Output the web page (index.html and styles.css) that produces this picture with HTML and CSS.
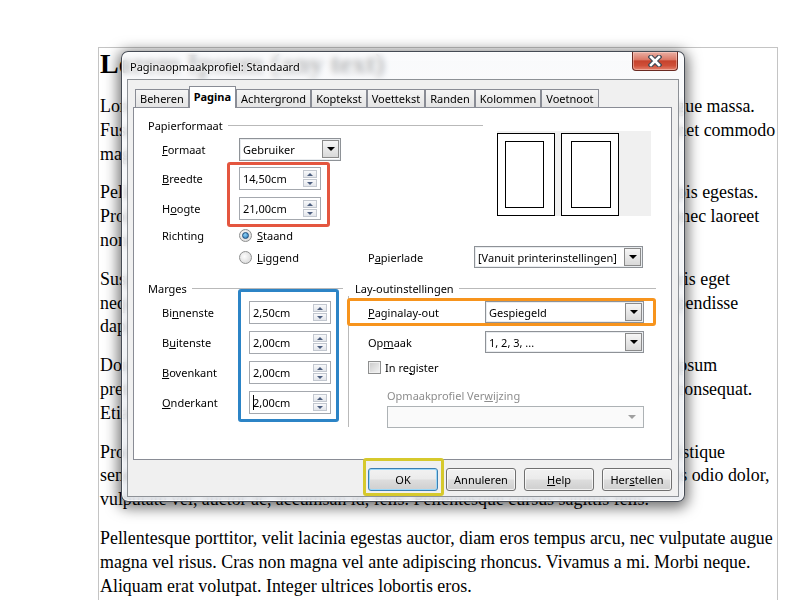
FILE: index.html
```html
<!DOCTYPE html>
<html lang="nl">
<head>
    <meta charset="UTF-8">
    <title>Paginaopmaakprofiel: Standaard</title>
    <link rel="stylesheet" href="styles.css">
</head>
<body>
    <!-- document page behind the dialog -->
    <div class="doc">
        <h1>Lorem Ipsum (any text)</h1>
        <p>Lorem ipsum dolor sit amet, consectetuer adipiscing elit. Maecenas porttitor congue massa. Fusce posuere, magna sed pulvinar ultricies, purus lectus malesuada libero, sit amet commodo magna eros quis urna.</p>
        <p>Pellentesque habitant morbi tristique senectus et netus et malesuada fames ac turpis egestas. Proin pharetra nonummy pede. Mauris et orci. Aenean nec lorem. In porttitor. Donec laoreet nonummy augue.</p>
        <p>Suspendisse dui purus, scelerisque at, vulputate vitae, pretium mattis, nunc. Mauris eget neque at sem venenatis eleifend. Ut nonummy. Fusce aliquet pede non pede. Suspendisse dapibus lorem pellentesque magna. Integer nulla.</p>
        <p>Donec blandit feugiat ligula. Donec hendrerit, felis et imperdiet euismod, purus ipsum pretium metus, in lacinia nulla nisl eget sapien. Donec ut est in lectus consequat consequat. Etiam eget dui. Aliquam erat volutpat. Sed at lorem in nunc porta tristique.</p>
        <p>Proin nec augue. Quisque aliquam tempor magna. Pellentesque habitant morbi tristique senectus et netus et malesuada fames ac turpis egestas. Nunc ac magna. Maecenas odio dolor, vulputate vel, auctor ac, accumsan id, felis. Pellentesque cursus sagittis felis.</p>
        <p>Pellentesque porttitor, velit lacinia egestas auctor, diam eros tempus arcu, nec vulputate augue magna vel risus. Cras non magna vel ante adipiscing rhoncus. Vivamus a mi. Morbi neque. Aliquam erat volutpat. Integer ultrices lobortis eros.</p>
    </div>

    <!-- page style dialog -->
    <div class="dialog">
        <div class="titlebar">
            <span class="title">Paginaopmaakprofiel: Standaard</span>
            <span class="close">
                <svg width="14" height="12" viewBox="0 0 14 12">
                    <path d="M3 2 L11 10 M11 2 L3 10" stroke="#434a55" stroke-width="5" stroke-linecap="square"/>
                    <path d="M3 2 L11 10 M11 2 L3 10" stroke="#fff" stroke-width="2.6" stroke-linecap="square"/>
                </svg>
            </span>
        </div>

        <div class="client">
            <div class="tabs">
                <div class="tab">Beheren</div>
                <div class="tab active">Pagina</div>
                <div class="tab">Achtergrond</div>
                <div class="tab">Koptekst</div>
                <div class="tab">Voettekst</div>
                <div class="tab">Randen</div>
                <div class="tab">Kolommen</div>
                <div class="tab">Voetnoot</div>
            </div>

            <div class="tab-page">
                <div class="paper-area">
                    <div class="paper-format">
                        <div class="group-title">Papierformaat</div>

                        <div class="field-row row-formaat">
                            <span class="lbl"><u>F</u>ormaat</span>
                            <div class="combo combo-formaat"><span class="val">Gebruiker</span><span class="drop"></span></div>
                        </div>

                        <div class="size-rows">
                            <div class="lbl-col">
                                <span><u>B</u>reedte</span>
                                <span>H<u>o</u>ogte</span>
                            </div>
                            <div class="hl hl-red">
                                <div class="spin"><span class="val">14,50cm</span><span class="spin-btns"><span class="up"></span><span class="down"></span></span></div>
                                <div class="spin"><span class="val">21,00cm</span><span class="spin-btns"><span class="up"></span><span class="down"></span></span></div>
                            </div>
                        </div>

                        <div class="field-row radio-row">
                            <span class="lbl">Richting</span>
                            <span class="radio on"></span><span><u>S</u>taand</span>
                        </div>
                    </div>

                    <div class="preview">
                        <div class="sheet left"><div class="sheet-inner"></div></div>
                        <div class="sheet right"><div class="sheet-inner"></div></div>
                    </div>
                </div>

                <div class="field-row radio-row tray-row">
                    <span class="lbl"></span>
                    <span class="radio-opt"><span class="radio"></span><span><u>L</u>iggend</span></span>
                    <span class="tray-lbl">P<u>a</u>pierlade</span>
                    <div class="combo combo-tray"><span class="val">[Vanuit printerinstellingen]</span><span class="drop"></span></div>
                </div>

                <div class="bottom-area">
                    <div class="margins">
                        <div class="group-title">Marges</div>
                        <div class="margin-rows">
                            <div class="lbl-col">
                                <span>Bi<u>n</u>nenste</span>
                                <span>B<u>u</u>itenste</span>
                                <span><u>B</u>ovenkant</span>
                                <span><u>O</u>nderkant</span>
                            </div>
                            <div class="hl hl-blue">
                                <div class="spin"><span class="val">2,50cm</span><span class="spin-btns"><span class="up"></span><span class="down"></span></span></div>
                                <div class="spin"><span class="val">2,00cm</span><span class="spin-btns"><span class="up"></span><span class="down"></span></span></div>
                                <div class="spin"><span class="val">2,00cm</span><span class="spin-btns"><span class="up"></span><span class="down"></span></span></div>
                                <div class="spin"><span class="val"><span class="caret"></span>2,00cm</span><span class="spin-btns"><span class="up"></span><span class="down"></span></span></div>
                            </div>
                        </div>
                    </div>

                    <div class="vsep"></div>

                    <div class="layout">
                        <div class="group-title">Lay-outinstellingen</div>

                        <div class="hl hl-orange">
                            <span class="lbl"><u>P</u>aginalay-out</span>
                            <div class="combo"><span class="val">Gespiegeld</span><span class="drop"></span></div>
                        </div>

                        <div class="layout-row">
                            <span class="lbl">Op<u>m</u>aak</span>
                            <div class="combo"><span class="val">1, 2, 3, ...</span><span class="drop"></span></div>
                        </div>

                        <div class="check-row">
                            <span class="checkbox"></span><span>In re<u>g</u>ister</span>
                        </div>

                        <div class="ref-label">Opmaakprofiel Ver<u>w</u>ijzing</div>
                        <div class="combo disabled ref-combo"><span class="val"></span><span class="drop"></span></div>
                    </div>
                </div>
            </div>

            <div class="actions">
                <div class="hl hl-yellow"><button class="btn default">OK</button></div>
                <button class="btn">Annuleren</button>
                <button class="btn"><u>H</u>elp</button>
                <button class="btn">Her<u>s</u>tellen</button>
            </div>
        </div>
    </div>
</body>
</html>
```

FILE: styles.css
```css
body {
    margin: 0;
    background: #fff;
}

/* ---- document ---- */
.doc {
    margin: 47px 0 0 98px;
    width: 676px;
    min-height: 560px;
    padding: 0 1px;
    border: 1px solid #c4c4c4;
    border-bottom: none;
    font-family: "Liberation Serif", "Times New Roman", serif;
    font-size: 17.9px;
    line-height: 23.8px;
    color: #000;
}

.doc h1 {
    margin: 0 0 7px;
    font-size: 28px;
    line-height: 32px;
    font-weight: bold;
}

.doc p {
    margin: 15px 0 0;
}

/* ---- dialog frame ---- */
.dialog {
    position: absolute;
    left: 121px;
    top: 51px;
    width: 564px;
    box-sizing: border-box;
    padding: 0 5px 4px;
    border: 1px solid rgba(40, 46, 56, 0.85);
    border-radius: 7px;
    background: linear-gradient(rgba(248, 249, 251, 0.72), rgba(232, 235, 240, 0.82));
    backdrop-filter: blur(3px);
    box-shadow: 0 3px 14px 3px rgba(0, 0, 0, 0.55), inset 0 0 0 1px rgba(255, 255, 255, 0.7);
    font-family: "Noto Sans", sans-serif;
    font-size: 11px;
    color: #000;
}

.titlebar {
    display: flex;
    justify-content: space-between;
    align-items: flex-start;
    height: 27px;
}

.title {
    margin: 7px 0 0 3px;
    line-height: 16px;
    text-shadow: 0 0 6px #fff, 0 0 3px #fff, 0 0 2px #fff;
}

.close {
    display: flex;
    align-items: center;
    justify-content: center;
    width: 46px;
    height: 19px;
    margin-right: 1px;
    box-sizing: border-box;
    border: 1px solid #6a2a22;
    border-top: none;
    border-radius: 0 0 4px 4px;
    background: linear-gradient(#eab0a4 0%, #dc7a68 42%, #c6432d 50%, #cf4f38 75%, #e4806b 100%);
    box-shadow: inset 0 0 0 1px rgba(255, 220, 210, 0.45);
}

.client {
    border: 1px solid #8d9196;
    background: #f0f0f0;
    padding: 6px 6px 5px 5px;
}

/* ---- tabs ---- */
.tabs {
    display: flex;
    align-items: flex-end;
    height: 21px;
    padding-left: 2px;
}

.tab {
    height: 18px;
    padding: 0 4px;
    box-sizing: border-box;
    border: 1px solid #898c95;
    border-bottom: none;
    background: linear-gradient(#f5f5f5, #e4e4e4);
    line-height: 17px;
    white-space: nowrap;
}

.tab.active {
    position: relative;
    z-index: 1;
    height: 22px;
    margin-bottom: -1px;
    background: #fff;
    font-weight: bold;
    line-height: 19px;
}

.tab-page {
    height: 353px;
    box-sizing: border-box;
    padding-top: 9px;
    border: 1px solid #898c95;
    background: #fff;
}

/* group headings with a rule after the text */
.group-title {
    display: flex;
    align-items: center;
    gap: 5px;
    height: 16px;
    padding-left: 14px;
    white-space: nowrap;
}

.group-title::after {
    content: "";
    flex: 1;
    border-top: 1px solid #b9b9b9;
}

.field-row {
    display: flex;
    align-items: center;
    height: 24px;
    padding-left: 28px;
    white-space: nowrap;
}

.field-row .lbl {
    width: 77px;
    flex-shrink: 0;
}

.lbl-col {
    display: flex;
    flex-direction: column;
    gap: 7px;
    padding-left: 28px;
    white-space: nowrap;
}

.lbl-col span {
    height: 23px;
    line-height: 23px;
}

/* ---- paper format ---- */
.paper-area {
    display: flex;
}

.paper-format {
    width: 349px;
    flex-shrink: 0;
}

.row-formaat {
    margin-top: 4px;
}

.size-rows {
    display: flex;
    align-items: flex-start;
}

.size-rows .lbl-col {
    width: 65px;
    margin-top: 6px;
}

.radio-row {
    height: 22px;
}

.paper-format .radio-row {
    margin-top: 3px;
}

.radio-opt {
    display: flex;
    align-items: center;
    width: 129px;
}

.tray-lbl {
    width: 106px;
}

.combo-tray {
    width: 169px;
}

.preview {
    display: flex;
    gap: 6px;
    width: 154px;
    height: 85px;
    margin: 14px 0 0 14px;
    padding-top: 2px;
    box-sizing: border-box;
    background: #f0f0f0;
}

.sheet {
    width: 58px;
    height: 83px;
    box-sizing: border-box;
    border: 1px solid #000;
    background: #fff;
}

.sheet.left {
    padding: 7px 10px 7px 7px;
}

.sheet.right {
    padding: 7px 7px 7px 9px;
}

.sheet-inner {
    height: 100%;
    box-sizing: border-box;
    border: 1px solid #000;
}

/* ---- margins + layout ---- */
.bottom-area {
    display: flex;
    margin-top: 12px;
}

.margins {
    width: 214px;
    flex-shrink: 0;
}

.margins .group-title {
    padding-right: 5px;
}

.margin-rows {
    display: flex;
    align-items: flex-start;
}

.margin-rows .lbl-col {
    width: 76px;
    margin-top: 5px;
}

.vsep {
    width: 0;
    height: 131px;
    margin-top: 16px;
    border-left: 1px solid #b9b9b9;
}

.layout {
    flex: 1;
}

.layout .group-title {
    padding: 0 15px 0 6px;
}

.layout .lbl {
    width: 117px;
    flex-shrink: 0;
}

.layout-row {
    display: flex;
    align-items: center;
    height: 22px;
    margin: 5px 27px 0 19px;
}

.layout-row .combo,
.hl-orange .combo {
    flex: 1;
}

.check-row {
    display: flex;
    align-items: center;
    gap: 4px;
    height: 16px;
    margin: 6px 0 0 19px;
}

.ref-label {
    height: 16px;
    line-height: 16px;
    margin: 13px 0 0 38px;
    color: #8d8d8d;
}

.ref-combo {
    margin: 2px 27px 0 38px;
}

/* ---- highlight frames ---- */
.hl {
    border: 3px solid;
    border-radius: 3px;
}

.hl-red {
    border-color: #e4563f;
    padding: 2px 6px 4px 9px;
    margin: 1px 0 -6px;
    display: flex;
    flex-direction: column;
    gap: 7px;
}

.hl-blue {
    border-color: #2c84c6;
    padding: 9px 5px 5px 8px;
    margin-top: -7px;
    display: flex;
    flex-direction: column;
    gap: 7px;
}

.hl-orange {
    border-color: #f7941d;
    display: flex;
    align-items: center;
    padding: 0 9px 0 18px;
    margin: 2px 15px 0 -2px;
    white-space: nowrap;
}

.hl-yellow {
    border-color: #d6c92c;
    padding: 7px 3px 2px 2px;
    margin: -10px -6px -5px -5px;
}

/* ---- controls ---- */
.combo {
    display: flex;
    align-items: center;
    height: 22px;
    box-sizing: border-box;
    padding-left: 3px;
    border: 1px solid #8e9297;
    background: #fff;
    box-shadow: inset 0 0 0 1px #e9ecef;
}

.combo .val {
    flex: 1;
    white-space: nowrap;
    overflow: hidden;
}

.combo .drop {
    display: flex;
    align-items: center;
    justify-content: center;
    width: 15px;
    height: 16px;
    margin-right: 1px;
    border: 1px solid #8a8a8a;
    background: linear-gradient(#f6f6f6, #d9d9d9);
}

.combo .drop::before {
    content: "";
    border-left: 4px solid transparent;
    border-right: 4px solid transparent;
    border-top: 4px solid #000;
}

.combo-formaat {
    width: 102px;
    height: 23px;
}

.combo.disabled {
    height: 22px;
    border-color: #adb2b5;
    background: #fafafa;
    box-shadow: none;
}

.combo.disabled .drop {
    border: none;
    background: none;
    margin-right: 4px;
}

.combo.disabled .drop::before {
    border-top-color: #a0a0a0;
}

.spin {
    display: flex;
    align-items: center;
    width: 82px;
    height: 23px;
    box-sizing: border-box;
    padding-left: 3px;
    border: 1px solid #a4a8ae;
    background: #fff;
}

.spin .val {
    flex: 1;
    display: flex;
    align-items: center;
}

.caret {
    width: 1px;
    height: 15px;
    margin-right: -1px;
    background: #000;
}

.spin-btns {
    display: flex;
    flex-direction: column;
    gap: 1px;
    width: 14px;
    height: 17px;
    margin-right: 3px;
}

.spin-btns span {
    flex: 1;
    display: flex;
    align-items: center;
    justify-content: center;
    border: 1px solid #c3c8d0;
    background: linear-gradient(#f8f9fb, #e3e6eb);
}

.spin-btns .up::before {
    content: "";
    border-left: 3px solid transparent;
    border-right: 3px solid transparent;
    border-bottom: 3px solid #4b5d7e;
}

.spin-btns .down::before {
    content: "";
    border-left: 3px solid transparent;
    border-right: 3px solid transparent;
    border-top: 3px solid #4b5d7e;
}

.radio {
    display: flex;
    align-items: center;
    justify-content: center;
    width: 13px;
    height: 13px;
    margin-right: 5px;
    box-sizing: border-box;
    border: 1px solid #8e8f8f;
    border-radius: 50%;
    background: radial-gradient(circle at 40% 40%, #fdfdfd, #d2d2d2);
}

.radio.on::after {
    content: "";
    width: 5px;
    height: 5px;
    border-radius: 50%;
    border: 1px solid #1c4d7c;
    background: radial-gradient(circle at 40% 35%, #8fd3f8, #2573b4);
}

.checkbox {
    width: 13px;
    height: 13px;
    box-sizing: border-box;
    border: 1px solid #8e8f8f;
    background: linear-gradient(135deg, #c9c9c9, #f5f5f5);
    box-shadow: inset 0 0 0 1px #f0f0f0;
}

/* ---- buttons ---- */
.actions {
    display: flex;
    justify-content: flex-end;
    align-items: flex-start;
    gap: 8px;
    margin-top: 8px;
}

.btn {
    width: 70px;
    height: 23px;
    padding: 0;
    border: 1px solid #707070;
    border-radius: 3px;
    background: linear-gradient(#f2f2f2 0%, #ebebeb 48%, #dddddd 52%, #cfcfcf 100%);
    box-shadow: inset 0 0 0 1px rgba(255, 255, 255, 0.7);
    font: inherit;
    color: #000;
}

.btn.default {
    display: block;
    border-color: #3c7fb1;
    box-shadow: inset 0 0 0 1px #9bd8f8;
}
```
